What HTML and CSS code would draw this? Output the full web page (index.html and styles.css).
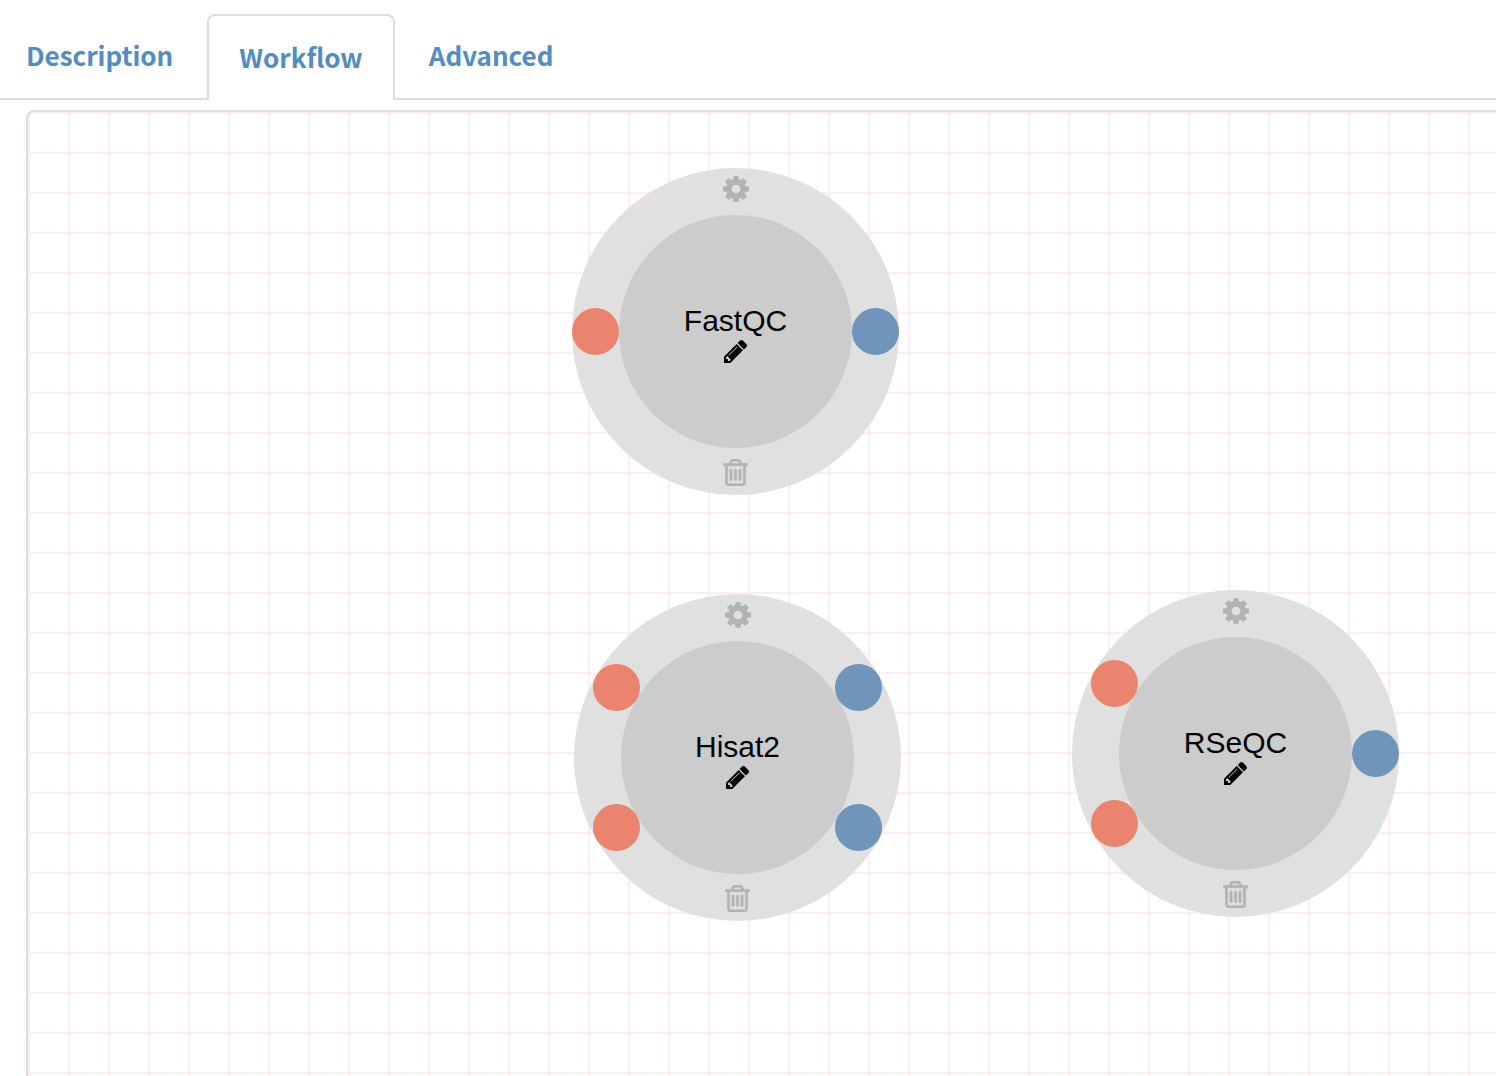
FILE: index.html
```html
<!DOCTYPE html>
<html lang="en">
<head>
<meta charset="utf-8">
<meta name="viewport" content="width=device-width, initial-scale=1">
<title>Workflow</title>
<link rel="stylesheet" href="styles.css">
</head>
<body>
<svg class="sprite" aria-hidden="true">
  <symbol id="cog" viewBox="128 128 1536 1536"><path d="M1152 896q0-106-75-181t-181-75-181 75-75 181 75 181 181 75 181-75 75-181zm512-109v222q0 12-8 23t-20 13l-185 28q-19 54-39 91 35 50 107 138 10 12 10 25t-9 23q-27 37-99 108t-94 71q-12 0-26-9l-138-108q-44 23-91 38-16 136-29 186-7 28-36 28h-222q-14 0-24.5-8.5t-11.5-21.5l-28-184q-49-16-90-37l-141 107q-10 9-25 9-14 0-25-11-126-114-165-168-7-10-7-23 0-12 8-23 15-21 51-66.5t54-70.5q-27-50-41-99l-183-27q-13-2-21-12.5t-8-23.5v-222q0-12 8-23t19-13l186-28q14-46 39-92-40-57-107-138-10-12-10-24 0-10 9-23 26-36 98.5-107.5t94.5-71.5q13 0 26 10l138 107q44-23 91-38 16-136 29-186 7-28 36-28h222q14 0 24.5 8.5t11.5 21.5l28 184q49 16 90 37l142-107q9-9 24-9 13 0 25 10 129 119 165 170 7 8 7 22 0 12-8 23-15 21-51 66.5t-54 70.5q26 50 41 98l183 28q13 2 21 12.5t8 23.5z"/></symbol>
  <symbol id="trash" viewBox="192 128 1408 1536"><path stroke="currentColor" stroke-width="36" d="M704 736v576q0 14-9 23t-23 9h-64q-14 0-23-9t-9-23v-576q0-14 9-23t23-9h64q14 0 23 9t9 23zm256 0v576q0 14-9 23t-23 9h-64q-14 0-23-9t-9-23v-576q0-14 9-23t23-9h64q14 0 23 9t9 23zm256 0v576q0 14-9 23t-23 9h-64q-14 0-23-9t-9-23v-576q0-14 9-23t23-9h64q14 0 23 9t9 23zm128 724v-948h-896v948q0 22 7 40.5t14.5 27 10.5 8.5h832q3 0 10.5-8.5t14.5-27 7-40.5zm-672-1076h448l-48-117q-7-9-17-11h-317q-10 2-17 11zm928 32v64q0 14-9 23t-23 9h-96v948q0 83-47 143.5t-113 60.5h-832q-66 0-113-58.5t-47-141.5v-952h-96q-14 0-23-9t-9-23v-64q0-14 9-23t23-9h309l70-167q15-37 54-63t79-26h320q40 0 79 26t54 63l70 167h309q14 0 23 9t9 23z"/></symbol>
  <symbol id="pencil" viewBox="128 149 1515 1515"><path d="M491 1536l91-91-235-235-91 91v107h128v128h107zm523-928q0-22-22-22-10 0-17 7l-542 542q-7 7-7 17 0 22 22 22 10 0 17-7l542-542q7-7 7-17zm-54-192l416 416-832 832h-416v-416zm683 96q0 53-37 90l-166 166-416-416 166-165q36-38 90-38 53 0 91 38l235 234q37 39 37 91z"/></symbol>
</svg>

<nav class="tabs">
  <a class="tab" href="#description">Description</a>
  <a class="tab tab-active" href="#workflow" aria-current="page">Workflow</a>
  <a class="tab" href="#advanced">Advanced</a>
</nav>

<main class="canvas">
  <section class="node node-fastqc">
    <button class="action" type="button" aria-label="Settings"><svg class="icon-cog"><use href="#cog"/></svg></button>
    <div class="core">
      <span class="name">FastQC</span>
      <button class="action edit" type="button" aria-label="Edit"><svg class="icon-pencil"><use href="#pencil"/></svg></button>
    </div>
    <button class="action" type="button" aria-label="Delete"><svg class="icon-trash"><use href="#trash"/></svg></button>
    <span class="port input middle"></span>
    <span class="port output middle"></span>
  </section>

  <section class="node node-hisat2">
    <button class="action" type="button" aria-label="Settings"><svg class="icon-cog"><use href="#cog"/></svg></button>
    <div class="core">
      <span class="name">Hisat2</span>
      <button class="action edit" type="button" aria-label="Edit"><svg class="icon-pencil"><use href="#pencil"/></svg></button>
    </div>
    <button class="action" type="button" aria-label="Delete"><svg class="icon-trash"><use href="#trash"/></svg></button>
    <span class="port input upper"></span>
    <span class="port input lower"></span>
    <span class="port output upper"></span>
    <span class="port output lower"></span>
  </section>

  <section class="node node-rseqc">
    <button class="action" type="button" aria-label="Settings"><svg class="icon-cog"><use href="#cog"/></svg></button>
    <div class="core">
      <span class="name">RSeQC</span>
      <button class="action edit" type="button" aria-label="Edit"><svg class="icon-pencil"><use href="#pencil"/></svg></button>
    </div>
    <button class="action" type="button" aria-label="Delete"><svg class="icon-trash"><use href="#trash"/></svg></button>
    <span class="port input upper"></span>
    <span class="port input lower"></span>
    <span class="port output middle"></span>
  </section>
</main>
</body>
</html>
```
FILE: styles.css
```css
* {
  box-sizing: border-box;
}

body {
  display: flex;
  flex-direction: column;
  min-height: 100vh;
  margin: 0;
  background: #fff;
}

.sprite {
  display: none;
}

/* Tab bar */
.tabs {
  display: flex;
  gap: 2px;
  height: 100px;
  padding-top: 14px;
  border-bottom: 2px solid #ddd;
}

.tab {
  height: 84px;
  padding: 21px 30px 0;
  border: 2px solid transparent;
  border-bottom: 0;
  border-radius: 8px 8px 0 0;
  color: #518cc7;
  font: 700 26px/36px "Noto Sans CJK JP", sans-serif;
  text-decoration: none;
}

.tab:first-child {
  padding-left: 24px;
}

.tab-active {
  height: 86px;
  padding-top: 23px;
  border-color: #ddd;
  background: #fff;
}

/* Graph canvas */
.canvas {
  position: relative;
  flex: 1;
  margin: 10px 0 0 26px;
  border: 2px solid #ddd;
  border-width: 2px 0 0 2px;
  border-radius: 8px 0 0 0;
  background-image:
    linear-gradient(#fceeee 2px, transparent 2px),
    linear-gradient(90deg, #fceeee 2px, transparent 2px);
  background-size: 40px 40px;
  min-height: 964px;
  overflow: hidden;
}

.node {
  position: absolute;
  display: flex;
  flex-direction: column;
  align-items: center;
  width: 327px;
  height: 327px;
  padding-top: 8px;
  border-radius: 50%;
  background: #e0e0e0;
}

.node-fastqc {
  left: 544px;
  top: 56px;
}

.node-hisat2 {
  left: 546px;
  top: 482px;
}

.node-rseqc {
  left: 1044px;
  top: 478px;
}

.core {
  display: flex;
  flex-direction: column;
  align-items: center;
  gap: 1px;
  width: 233px;
  height: 233px;
  margin: 13px 0 11px;
  padding-top: 88px;
  border-radius: 50%;
  background: #ccc;
}

.name {
  color: #000;
  font: 30px/36px "Liberation Sans", Arial, sans-serif;
}

.action {
  display: flex;
  padding: 0;
  border: 0;
  background: none;
  color: #b3b3b3;
  cursor: pointer;
}

.edit {
  color: #000;
}

.icon-cog,
.icon-trash,
.icon-pencil {
  fill: currentColor;
}

.icon-cog {
  width: 26px;
  height: 26px;
}

.icon-trash {
  width: 25px;
  height: 27px;
}

.icon-pencil {
  width: 23px;
  height: 23px;
}

/* Connection ports, set round the ring */
.port {
  position: absolute;
  width: 47px;
  height: 47px;
  border-radius: 50%;
}

.input {
  left: 19px;
  background: #eb846e;
}

.output {
  right: 19px;
  background: #6f95bb;
}

.middle {
  top: 140px;
}

.input.middle {
  left: 0;
}

.output.middle {
  right: 0;
}

.upper {
  top: 70px;
}

.lower {
  top: 210px;
}
```
